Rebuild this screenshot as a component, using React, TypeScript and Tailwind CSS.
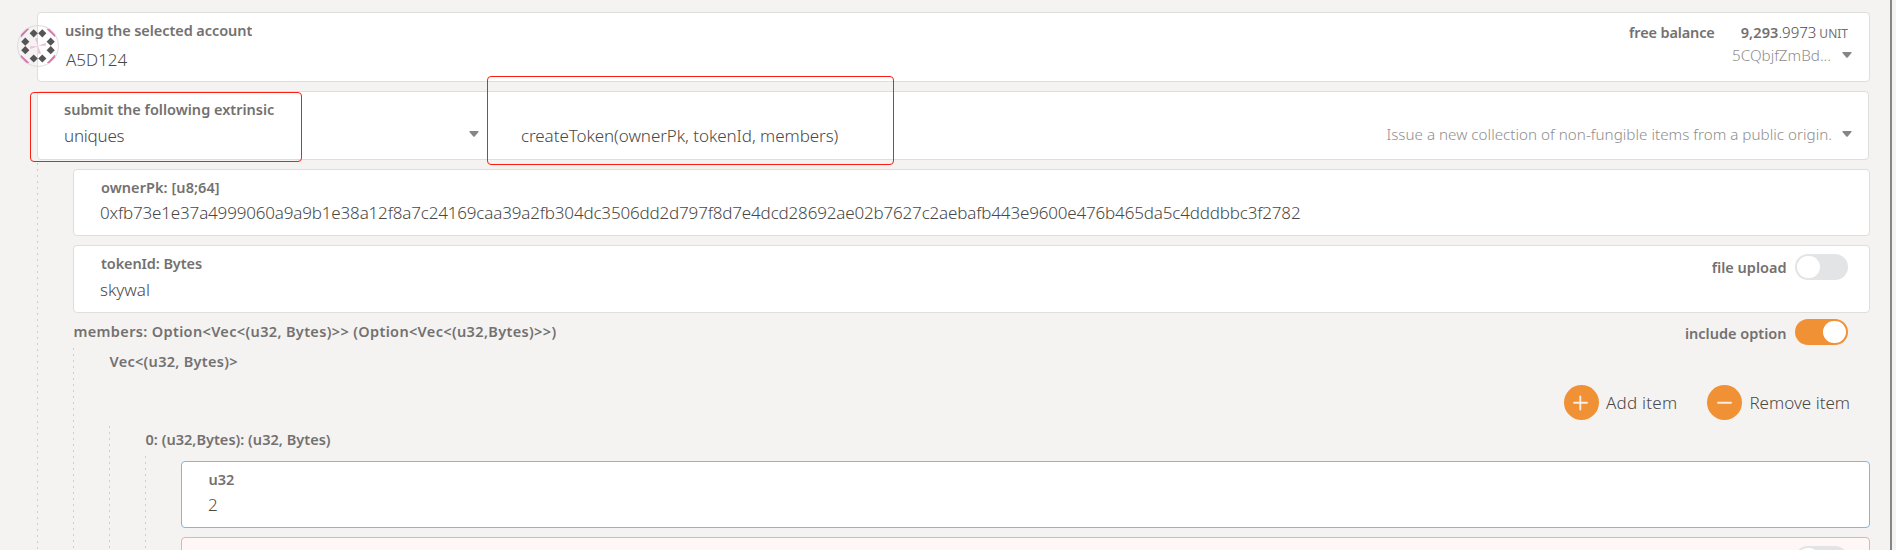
import React from "react";

const labelCls = "h-[19px] shrink-0 overflow-hidden whitespace-nowrap font-['Noto_Sans'] text-[14.5px] leading-[20px] font-semibold text-[#737170]";
const valueCls = "shrink-0 whitespace-nowrap font-['Noto_Sans'] text-[17px] leading-[24px] font-light text-[#4a4846]";
const hintCls = "shrink-0 whitespace-nowrap font-['Noto_Sans'] text-[15.2px] leading-[20px] font-light text-[#8f8e8d]";
const nestCls =
  "flex flex-col bg-[repeating-linear-gradient(to_bottom,#cfcecc_0_2px,transparent_2px_6px)] bg-[length:1px_100%] bg-no-repeat pl-9";

function Caret() {
  return (
    <svg width="10" height="6" viewBox="0 0 10 6" className="shrink-0">
      <path d="M1 0h8q1 .3.5 1L5.7 5.4q-.7.8-1.4 0L.5 1Q0 .3 1 0z" fill="#868684" />
    </svg>
  );
}

function Toggle({ on = false }: { on?: boolean }) {
  return (
    <div
      className={
        on
          ? "flex h-[26px] w-[53px] shrink-0 items-center justify-end rounded-full bg-[#f19135] px-0.5"
          : "flex h-[26px] w-[53px] shrink-0 items-center rounded-full bg-[#e3e4e5] px-0.5"
      }
    >
      <div className="h-[22px] w-[23px] rounded-full bg-white" />
    </div>
  );
}

function RoundButton({ icon, children }: { icon: "plus" | "minus"; children: React.ReactNode }) {
  return (
    <button className="flex h-[35px] items-center">
      <svg width="35" height="35" viewBox="0 0 35 35" className="shrink-0">
        <circle cx="17.5" cy="17.5" r="17.5" fill="#f19135" />
        <g stroke="#f8eee3" strokeWidth="1.9" strokeLinecap="round">
          {icon === "plus" ? <path d="M10 17.7h13M16.3 11.5v13" /> : <path d="M11 17.7h13" />}
        </g>
      </svg>
      {children}
    </button>
  );
}

const diamonds = [
  [33.7, 33.3], [42.3, 33.3], [25.3, 41.7], [50.7, 41.7],
  [25.3, 50.2], [50.7, 50.2], [33.7, 58.5], [42.3, 58.5],
];

function Identicon() {
  return (
    <svg width="42" height="42" viewBox="17 25 42 42" className="absolute top-[25px] left-[17px]">
      <circle cx="38" cy="46" r="20.4" fill="none" stroke="#dfdfdf" strokeWidth="1.1" />
      {[0, 90, 180, 270].map((a) => (
        <g key={a} transform={`rotate(${a} 38 46)`}>
          <path d="M21.2 37.2l7.6-8.2h-1.9l-5.7 5.6z" fill="#d573ab" stroke="#d573ab" strokeWidth=".4" />
          <path d="M35 38.2h2.8v8z" fill="#ecbfd8" />
        </g>
      ))}
      {diamonds.map(([x, y]) => (
        <path key={`${x}-${y}`} d={`M${x - 4.1} ${y}l4.1-4.1 4.1 4.1-4.1 4.1z`} fill="#555" />
      ))}
    </svg>
  );
}

export default function App() {
  return (
    <div className="relative flex h-[550px] w-full overflow-hidden bg-[#f4f3f2]">
      <main className="flex min-w-0 flex-1 flex-col pt-3 pr-5 pl-[37px]">
        <section className="flex h-[70px] shrink-0 justify-between rounded border border-[#dededd] bg-white">
          <div className="flex flex-col pt-[7px] pl-[27px]">
            <div className={`${labelCls} tracking-[-0.07px]`}>using the selected account</div>
            <div className={`${valueCls} mt-[9px] pl-px`}>A5D124</div>
          </div>
          <div className="flex flex-col items-end pt-[9px] pr-[17px]">
            <div className="flex items-baseline pr-1">
              <div className={`${labelCls} mr-[26px] tracking-[-0.14px]`}>free balance</div>
              <div className={labelCls}>
                <span className="tracking-[0.1px]">9,293</span>
                <span className="text-[15px] font-light text-[#4a4846]">.9973</span>
                <span className="ml-[3px] text-[12px] font-normal">UNIT</span>
              </div>
            </div>
            <div className="mt-1 flex items-center gap-[11px]">
              <div className={hintCls}>5CQbjfZmBd...</div>
              <Caret />
            </div>
          </div>
        </section>

        <section className="mt-[9px] mr-px flex h-[69px] shrink-0 rounded border border-[#dededd] bg-white">
          <div className="flex w-[483px] flex-col pt-[7px] pl-[26px]">
            <div className={labelCls}>submit the following extrinsic</div>
            <div className="mt-1.5 flex w-[415px] items-start justify-between">
              <div className={`${valueCls} tracking-[-0.23px]`}>uniques</div>
              <div className="mt-[7px] flex"><Caret /></div>
            </div>
          </div>
          <div className="flex flex-1 items-start justify-between pt-8 pr-4">
            <div className={`${valueCls} tracking-[-0.07px]`}>createToken(ownerPk, tokenId, members)</div>
            <div className="flex items-center gap-2.5">
              <div className={`${hintCls} tracking-[0.02px]`}>Issue a new collection of non-fungible items from a public origin.</div>
              <Caret />
            </div>
          </div>
        </section>

        <div className={`${nestCls} mt-[3px] h-[387px] shrink-0`}>
          <section className="mt-1.5 flex h-[67px] shrink-0 flex-col rounded border border-[#dededd] bg-white pt-[7px] pl-[26px]">
            <div className={`${labelCls} pl-px tracking-[0.06px]`}>ownerPk: [u8;64]</div>
            <div className={`${valueCls} mt-[5px] tracking-[-0.17px]`}>
              0xfb73e1e37a4999060a9a9b1e38a12f8a7c24169caa39a2fb304dc3506dd2d797f8d7e4dcd28692ae02b7627c2aebafb443e9600e476b465da5c4dddbbc3f2782
            </div>
          </section>
          <section className="mt-[9px] flex h-[68px] shrink-0 justify-between rounded border border-[#dededd] bg-white pr-[21px] pl-[26px]">
            <div className="flex flex-col pt-[7px]">
              <div className={`${labelCls} pl-px tracking-[-0.1px]`}>tokenId: Bytes</div>
              <div className={`${valueCls} mt-1.5`}>skywal</div>
            </div>
            <div className="mt-2 flex h-[26px] items-center gap-[8.5px]">
              <div className={`${labelCls} mt-0.5 h-[22px]`}>file upload</div>
              <Toggle />
            </div>
          </section>
          <div className="flex h-[35px] shrink-0 justify-between pt-1.5 pr-[22px]">
            <div className={`${labelCls} mt-0.5 pl-[0.5px] tracking-[0.35px]`}>
              members: Option&lt;Vec&lt;(u32, Bytes)&gt;&gt; (Option&lt;Vec&lt;(u32,Bytes)&gt;&gt;)
            </div>
            <div className="flex h-[26px] items-center gap-[8.5px]">
              <div className={`${labelCls} mt-[3px] h-[22px]`}>include option</div>
              <Toggle on />
            </div>
          </div>
          <div className={`${nestCls} flex-1`}>
            <div className={`${labelCls} mt-[3px] pl-[0.5px] tracking-[0.3px]`}>Vec&lt;(u32, Bytes)&gt;</div>
            <div className="mt-[15px] flex h-[35px] shrink-0 justify-end gap-[30px] pr-5">
              <RoundButton icon="plus">
                <span className={`${valueCls} ml-[7px] tracking-[0.25px]`}>Add item</span>
              </RoundButton>
              <RoundButton icon="minus">
                <span className={`${valueCls} ml-[7px]`}>Remove item</span>
              </RoundButton>
            </div>
            <div className={`${nestCls} mt-1.5 flex-1`}>
              <div className={`${labelCls} mt-[3px] pl-[0.5px] tracking-[0.03px]`}>0: (u32,Bytes): (u32, Bytes)</div>
              <div className={`${nestCls} mt-2 flex-1`}>
                <section className="mt-[5px] flex h-[67px] shrink-0 flex-col rounded border border-[#85b7d9] bg-white pt-[7px] pl-[26px]">
                  <div className={`${labelCls} pl-[0.5px]`}>u32</div>
                  <div className={`${valueCls} mt-[5px]`}>2</div>
                </section>
                <section className="mt-[9px] flex h-[68px] shrink-0 justify-end rounded border border-[#e0b4b4] bg-[#fff6f6] pt-2 pr-[21px]">
                  <Toggle />
                </section>
              </div>
            </div>
          </div>
        </div>
      </main>
      <div className="w-0.5 shrink-0 bg-[#888683]" />
      <div className="w-1 shrink-0" />

      <Identicon />
      <div className="absolute top-[92px] left-[30px] h-[70px] w-[272px] rounded border border-[#fb1d10]" />
      <div className="absolute top-[76px] left-[487px] h-[89px] w-[407px] rounded border border-[#fb1d10]" />
    </div>
  );
}
